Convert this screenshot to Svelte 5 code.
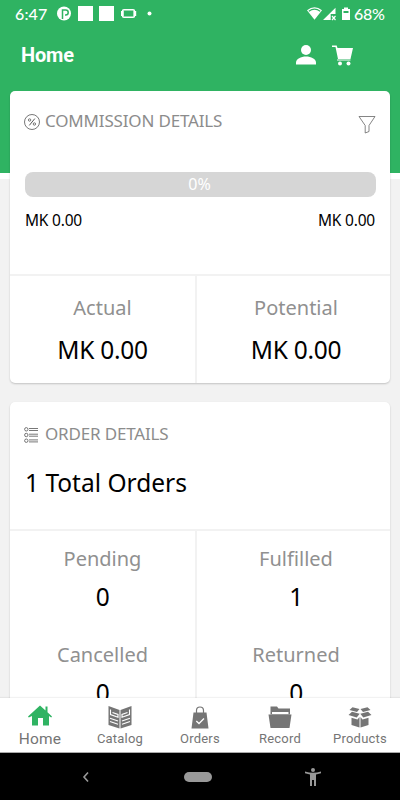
<script>
  const commission = [
    { label: 'Actual', value: 'MK 0.00' },
    { label: 'Potential', value: 'MK 0.00' }
  ];
  const orders = [
    { label: 'Pending', value: '0' },
    { label: 'Fulfilled', value: '1' },
    { label: 'Cancelled', value: '0' },
    { label: 'Returned', value: '0' }
  ];
  const tabs = ['Home', 'Catalog', 'Orders', 'Record', 'Products'];
</script>

<div class="screen">
  <div class="status">
    <span class="time">6:47</span>
    <svg class="notifications" width="98" height="16" viewBox="0 0 98 16" fill="#fff">
      <circle cx="7" cy="7.5" r="7" />
      <path d="M5.500 13V4h3.200a2.500 2.500 0 0 1 0 5H8" fill="none" stroke="#2fb362" stroke-width="1.500" />
      <path d="M21 0h15v15H21zM42 0h15v15H42z" />
      <rect x="65.5" y="3.7" width="12" height="7.6" rx="1.5" fill="none" stroke="#fff" stroke-width="1.5" />
      <path d="M64 5h2.7v5H64zM76.500 5h2.700v5h-2.700z" />
      <circle cx="92.500" cy="7.500" r="2" />
    </svg>
    <svg class="signals" width="44" height="14" viewBox="0 0 44 14" fill="#fff">
      <path d="M0 3.300Q7.500-2.600 15 3.300L7.500 12.800z" />
      <path d="M1.800 4.200Q7.500 0 13.200 4.200" fill="none" stroke="#2fb362" stroke-width="1.100" />
      <path d="M16 13 28.500.800V7h-4.800v6z" />
      <path d="m25 9 3.500 4m0-4L25 13" stroke="#fff" stroke-width="1.200" />
      <path d="M35 2h2V.500h4V2h2v11h-8z" />
      <path d="M36.500 4h5v2h-5z" fill="#2fb362" />
    </svg>
    <span class="percent">68%</span>
  </div>

  <header>
    <h1>Home</h1>
    <svg width="20" height="20" viewBox="0 0 20 20" fill="#fff">
      <circle cx="10" cy="5" r="5" />
      <path d="M0 19.500v-2C0 14 5 11.500 10 11.500s10 2.500 10 6v2z" />
    </svg>
    <svg class="cart" width="22" height="21" viewBox="0 0 22 21" fill="#fff">
      <path d="M0 .500h4.700L5.500 3H21l-2.500 11H6L3.500 2H0zM5 14.500h13.500v1H5z" />
      <circle cx="8" cy="18.400" r="2" /><circle cx="16.500" cy="18.400" r="2" />
    </svg>
  </header>

  <main>
    <section class="card first">
      <div class="title">
        <svg width="16" height="16" viewBox="0 0 16 16" fill="none" stroke="#555" stroke-width=".8">
          <circle cx="8" cy="8" r="7.500" />
          <circle cx="5.600" cy="6" r="1.200" /><circle cx="10.400" cy="10" r="1.200" />
          <path d="m10.800 4.600-5.500 6.800" stroke-width="1" />
        </svg>
        <h2>COMMISSION DETAILS</h2>
        <svg class="filter" width="18" height="19" viewBox="0 0 18 19" fill="none" stroke="#666" stroke-width=".8">
          <path d="M1 1.500h16L11 10.500v6L7.200 18v-7.500z" />
        </svg>
      </div>
      <div class="progress">0%</div>
      <div class="range"><span>MK 0.00</span><span>MK 0.00</span></div>
      <div class="grid">
        {#each commission as item}
          <div class="cell"><span class="label">{item.label}</span><span class="value">{item.value}</span></div>
        {/each}
      </div>
    </section>

    <section class="card second">
      <div class="title">
        <svg width="16" height="16" viewBox="0 0 16 16" fill="none" stroke="#555" stroke-width=".8">
          <circle cx="2.300" cy="2.300" r="1.700" /><circle cx="2.300" cy="8" r="1.700" /><circle cx="2.300" cy="13.700" r="1.700" />
          <path d="M5 1.500h9M5 3.500h9M5 7.200h9M5 9.200h9M5 12.900h9M5 14.900h9" />
        </svg>
        <h2>ORDER DETAILS</h2>
      </div>
      <p class="total">1 Total Orders</p>
      <div class="grid">
        {#each orders as item}
          <div class="cell"><span class="label">{item.label}</span><span class="value">{item.value}</span></div>
        {/each}
      </div>
    </section>
  </main>

  <nav>
    {#each tabs as tab}
      <div class="tab" class:active={tab === 'Home'}>
        <svg width="26" height="24" viewBox="0 0 26 24" fill="#757575">
          {#if tab === 'Home'}
            <path d="m1 11.500 12-11 5.500 5V1.500h2v5.800L25 11.500l-.8 1L22 11v9.500h-6V13h-5v7.500H5V11l-3.200 1.500z" fill="#2fb362" />
          {:else if tab === 'Catalog'}
            <path d="M1.500 1 12.500 5V23.500L1.500 20zM24.500 1 13.500 5V23.500l11-3.500z" />
            <path d="m3 13.200 8 2.800M3 16.500l8 2.800M15 16l8-2.800M15 19.300l8-2.800M3.500 4.500v5l7.500 2.800V9.500L5.500 7.500M22.500 4.500v5L15 12.300V9.500l5.500-2" fill="none" stroke="#fff" stroke-width="1.100" />
          {:else if tab === 'Orders'}
            <path d="M6.500 7.500h13L21.500 23.500h-17z" />
            <path d="M9.500 10V5.500a3.500 3.500 0 0 1 7 0V10" fill="none" stroke="#757575" stroke-width="1.200" />
            <path d="m9.300 16 2.700 2.500 5-5" fill="none" stroke="#fff" stroke-width="1.300" />
          {:else if tab === 'Record'}
            <path d="M3.500 1.500h6.500l1.500 2h11.500v6H3.500z" />
            <path d="M5 7h16.500v2H5z" fill="#fff" />
            <path d="M1.500 9.500h23l-2 13.500h-19z" />
          {:else}
            <path d="m5.500 2.200 7 1.800-2.500 3L2.500 5zM20.500 2.200l-7 1.800 2.500 3 7.500-2zM5 6.700l7.700 2.100-3 3.700L1.500 10zM21 6.700l-7.700 2.100 3 3.700 8.200-2.500zM4.500 12.700l6 1.800 2-2.500v10.500l-8-2.500zM21.500 12.700l-6 1.800-2-2.500v10.500l8-2.500z" />
          {/if}
        </svg>
        <span>{tab}</span>
      </div>
    {/each}
  </nav>

  <footer>
    <svg width="8" height="12" viewBox="0 0 8 12" fill="none" stroke="#999" stroke-width="1.600"><path d="M6 1.500 2 6l4 4.500" /></svg>
    <div class="pill"></div>
    <svg width="16" height="18" viewBox="0 0 16 18" fill="#999">
      <circle cx="8" cy="2" r="2" />
      <path d="M0 3.500q8 2.500 16 0v1.800L11 6.500V18H9v-6H7v6H5V6.500L0 5.300z" />
    </svg>
  </footer>
</div>

<style>
  .screen {
    width: 400px;
    height: 800px;
    overflow: hidden;
    display: flex;
    flex-direction: column;
    background: linear-gradient(#2fb362 173px, #fff 173px, #fff 179px, #f2f2f2 179px);
    font-family: 'Noto Sans', sans-serif;
    color: #000;
  }
  svg { display: block; flex: none; }
  h1, h2, p { margin: 0; font-weight: 400; }
  .status {
    height: 28px;
    flex: none;
    box-sizing: border-box;
    padding: 0 12px 0 15px;
    display: flex;
    align-items: center;
    color: #fff;
    font: 500 16px/28px Lato, sans-serif;
  }
  .time { width: 42px; letter-spacing: .1px; }
  .notifications { margin-top: -1px; }
  .signals { margin-left: auto; }
  .percent { width: 34px; margin-left: 3px; font-size: 16px; white-space: nowrap; letter-spacing: -.3px; }
  header {
    height: 54px;
    flex: none;
    box-sizing: border-box;
    padding: 0 46px 0 21px;
    display: flex;
    align-items: center;
    margin-bottom: 9px;
    color: #fff;
  }
  header h1 { font: 700 20px/24px Roboto, sans-serif; margin-right: auto; letter-spacing: -.2px; }
  header .cart { margin-left: 16px; }
  main {
    flex: 1;
    min-height: 0;
    overflow: hidden;
    padding: 0 10px;
    display: flex;
    flex-direction: column;
    gap: 19px;
  }
  .card {
    flex: none;
    display: flex;
    flex-direction: column;
    background: #fff;
    border-radius: 5px;
    box-shadow: 0 1px 2px rgba(0, 0, 0, .2);
  }
  .first { height: 292px; }
  .title {
    height: 20px;
    margin: 20px 14px 0 14px;
    display: flex;
    align-items: center;
  }
  .title h2 { margin-left: 5px; font-size: 17px; line-height: 20px; color: #8c8c8c; letter-spacing: -.17px; }
  .filter { margin: 7px 0 0 auto; }
  .title > svg:first-child { margin-top: 2px; }
  .progress {
    height: 25px;
    margin: 41px 14px 0 15px;
    border-radius: 8px;
    background: #d6d6d6;
    color: #fff;
    text-align: center;
    font-size: 16px;
    line-height: 25px;
    text-indent: -2px;
  }
  .range {
    margin: 13px 15px 0;
    height: 20px;
    display: flex;
    justify-content: space-between;
    font-size: 15.500px;
    letter-spacing: -.2px;
    line-height: 20px;
  }
  .grid {
    border-top: 2px solid #f2f2f2;
    display: grid;
    grid-template-columns: 187px 193px;
  }
  .first .grid { margin-top: 44px; flex: 1; }
  .cell {
    display: flex;
    flex-direction: column;
    align-items: center;
    padding-top: 17px;
  }
  .cell:nth-child(odd) { border-right: 2px solid #f2f2f2; }
  .cell:nth-child(even) { padding-left: 5px; }
  .label { font-size: 20px; line-height: 30px; color: #909090; }
  .value { font-size: 24.500px; line-height: 36px; margin-top: 9px; letter-spacing: -.3px; }
  .total { margin: 21px 15px 0; font-size: 24.500px; line-height: 36px; height: 64px; }
  .second .title { margin-top: 22px; }
  .second .cell { height: 96px; box-sizing: border-box; padding-top: 13px; }
  .second .value { margin-top: 5px; }
  nav {
    height: 54px;
    flex: none;
    display: flex;
    background: #fff;
    border-bottom: 1px solid #aaa;
    box-shadow: 0 -1px 1px rgba(0, 0, 0, .05);
    z-index: 1;
  }
  .tab {
    flex: 1;
    display: flex;
    flex-direction: column;
    align-items: center;
    padding-top: 7px;
    font: 400 13px/18px Roboto, sans-serif;
    letter-spacing: .2px;
    color: #757575;
  }
  .tab svg { margin-bottom: 1px; }
  .tab.active { font-size: 15.500px; }
  footer {
    height: 47px;
    flex: none;
    background: #000;
    display: flex;
    align-items: center;
    justify-content: space-between;
    box-sizing: border-box;
    padding: 0 79px 0 82px;
  }
  .pill { width: 28px; height: 10px; border-radius: 5px; background: #999; }
</style>
